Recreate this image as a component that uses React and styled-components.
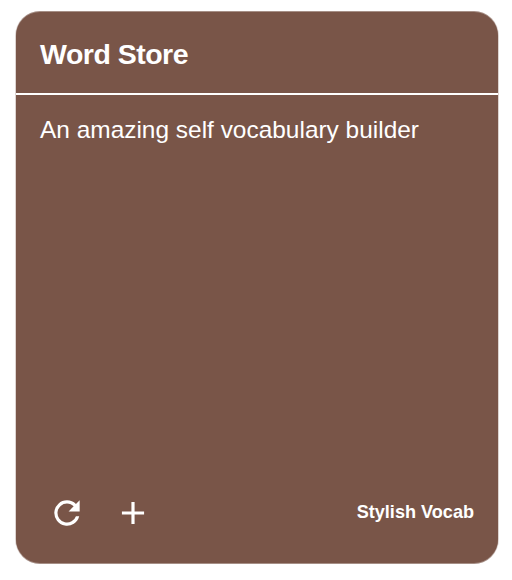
import React from 'react';
import styled, { createGlobalStyle } from 'styled-components';

const GlobalStyle = createGlobalStyle`
  * { box-sizing: border-box; }
  body { margin: 0; background: #fff; font-family: "Liberation Sans", Arial, sans-serif; }
`;

const Page = styled.main`
  height: 580px;
  padding: 12px 14px 17px 16px;
  display: flex;
`;

const Card = styled.article`
  flex: 1;
  display: flex;
  flex-direction: column;
  overflow: hidden;
  border-radius: 24px;
  background: #795548;
  box-shadow: 0 -1px 0 rgba(121, 85, 72, 0.55), 0 1px 0 rgba(121, 85, 72, 0.55),
    0 0 0 1px rgba(121, 85, 72, 0.25);
  color: #fff;
`;

const CardHeader = styled.header`
  height: 83px;
  padding: 25px 24px 0;
  border-bottom: 2px solid #fff;
`;

const Title = styled.h1`
  margin: 0;
  font-size: 28.5px;
  letter-spacing: -0.5px;
  line-height: 34px;
`;

const Description = styled.p`
  flex: 1;
  margin: 0;
  padding: 20px 24px;
  font-size: 24.45px;
  line-height: 30px;
  white-space: nowrap;
`;

const CardFooter = styled.footer`
  height: 78px;
  padding: 0 24px 0 35px;
  display: flex;
  align-items: flex-start;
`;

const Actions = styled.div`
  display: flex;
  gap: 34px;
  margin-right: auto;
`;

const IconButton = styled.button`
  width: 32px;
  height: 56px;
  padding: 0;
  border: 0;
  background: none;
  color: inherit;
  display: flex;
  align-items: center;
  justify-content: center;
`;

const Icon = styled.svg`
  width: 38px;
  height: 38px;
  flex: none;
  fill: currentColor;
`;

const Brand = styled.strong`
  font-size: 18.1px;
  line-height: 54px;
`;

export default function App() {
  return (
    <>
      <GlobalStyle />
      <Page>
        <Card>
          <CardHeader><Title>Word Store</Title></CardHeader>
          <Description>An amazing self vocabulary builder</Description>
          <CardFooter>
            <Actions>
              <IconButton aria-label="Refresh">
                <Icon viewBox="0 0 24 24"><path d="M17.65 6.35A7.96 7.96 0 0 0 12 4a8 8 0 1 0 7.73 10h-2.08A6 6 0 1 1 12 6c1.66 0 3.14.69 4.22 1.78L13 11h7V4z" /></Icon>
              </IconButton>
              <IconButton aria-label="Add">
                <Icon viewBox="0 0 24 24"><path d="M19 13h-6v6h-2v-6H5v-2h6V5h2v6h6z" /></Icon>
              </IconButton>
            </Actions>
            <Brand>Stylish Vocab</Brand>
          </CardFooter>
        </Card>
      </Page>
    </>
  );
}
